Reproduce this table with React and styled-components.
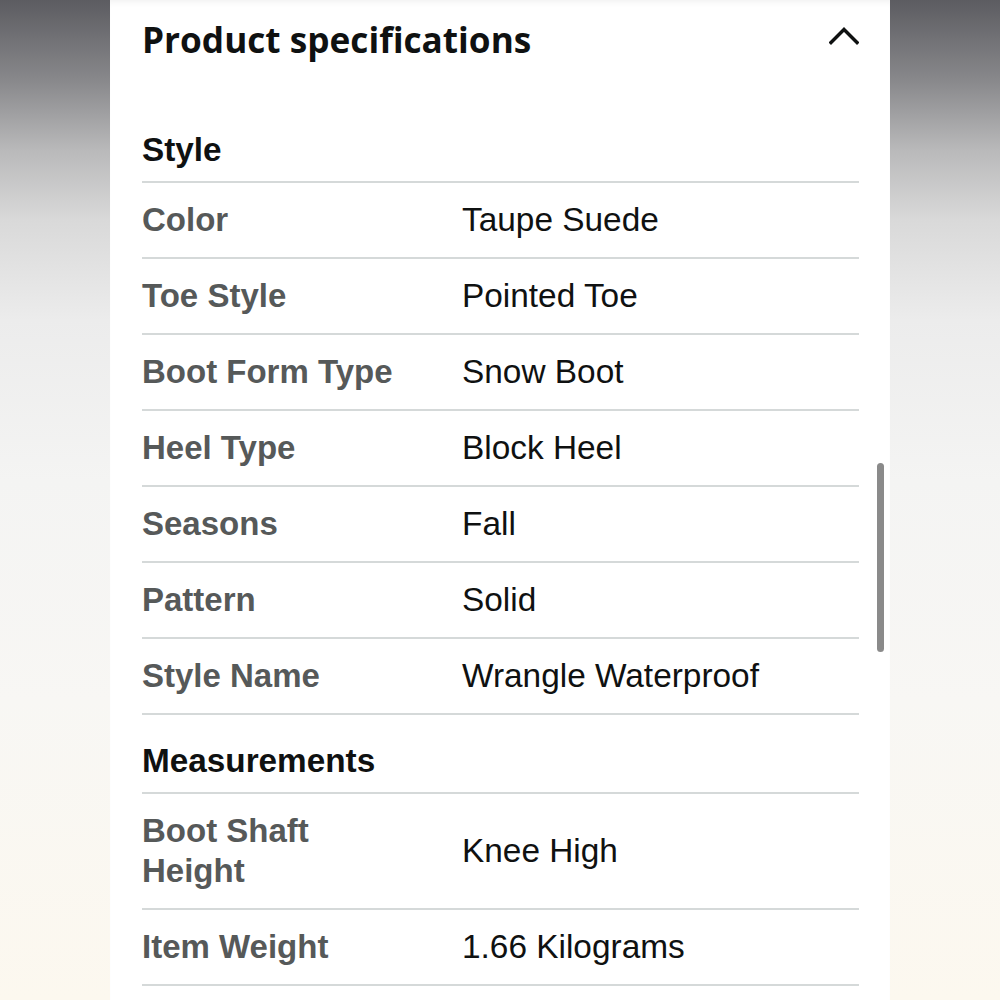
import React from "react";
import styled, { createGlobalStyle } from "styled-components";

const Global = createGlobalStyle`
  html, body { margin: 0; padding: 0; }
  body { width: 1000px; height: 1000px; overflow: hidden; }
`;

const Stage = styled.div`
  width: 1000px;
  height: 1000px;
  display: flex;
  justify-content: center;
  background: linear-gradient(
    180deg,
    #5c5c61 0%,
    #88888b 8%,
    #b9b9ba 15%,
    #d9d9d9 22%,
    #ececec 32%,
    #f4f4f3 48%,
    #f8f7f4 70%,
    #fcf8ef 100%
  );
`;

const Panel = styled.div`
  position: relative;
  width: 780px;
  height: 1000px;
  box-sizing: border-box;
  padding: 0 31px 0 32px;
  background: #ffffff;
  overflow: hidden;
  box-shadow: inset 0 6px 6px -4px rgba(0, 0, 0, 0.06);
`;

const TitleRow = styled.div`
  display: flex;
  align-items: center;
  justify-content: space-between;
  height: 104px;
  box-sizing: border-box;
  padding: 19px 0 45px 0;
`;

const Title = styled.h1`
  margin: 0;
  font-family: "Open Sans", "Noto Sans", sans-serif;
  font-weight: 700;
  font-size: 35.2px;
  line-height: 40px;
  color: #0f1111;
`;

const Chevron = styled.svg`
  width: 30px;
  height: 20px;
  margin-top: -8px;
`;

const SectionHeader = styled.div`
  padding: 26px 0 11px 0;
  line-height: 40px;
  font-family: "Liberation Sans", Arial, sans-serif;
  font-weight: 700;
  font-size: 33.3px;
  color: #0f1111;
  border-bottom: 2px solid #d5d9d9;
`;

const Row = styled.div`
  display: grid;
  grid-template-columns: 320px 1fr;
  align-items: center;
  padding: 17px 0;
  border-bottom: 2px solid #d5d9d9;
`;

const Label = styled.div`
  max-width: 262px;
  font-family: "Liberation Sans", Arial, sans-serif;
  font-weight: 700;
  font-size: 33px;
  line-height: 40px;
  color: #565959;
`;

const Value = styled.div`
  font-family: "Liberation Sans", Arial, sans-serif;
  font-weight: 400;
  font-size: 33.4px;
  line-height: 40px;
  color: #0f1111;
`;

const ScrollThumb = styled.div`
  position: absolute;
  left: 767px;
  top: 463px;
  width: 7px;
  height: 189px;
  border-radius: 4px;
  background: #8a8a8a;
`;

const sections = [
  {
    title: "Style",
    rows: [
      ["Color", "Taupe Suede"],
      ["Toe Style", "Pointed Toe"],
      ["Boot Form Type", "Snow Boot"],
      ["Heel Type", "Block Heel"],
      ["Seasons", "Fall"],
      ["Pattern", "Solid"],
      ["Style Name", "Wrangle Waterproof"],
    ],
  },
  {
    title: "Measurements",
    rows: [
      ["Boot Shaft Height", "Knee High"],
      ["Item Weight", "1.66 Kilograms"],
    ],
  },
];

export default function App() {
  return (
    <>
      <Global />
      <Stage>
        <Panel>
          <TitleRow>
            <Title>Product specifications</Title>
            <Chevron viewBox="0 0 30 20" fill="none">
              <path
                d="M2 17.5 L15 4.5 L28 17.5"
                stroke="#0f1111"
                strokeWidth="3.4"
                strokeLinecap="square"
                strokeLinejoin="miter"
              />
            </Chevron>
          </TitleRow>
          {sections.map((s) => (
            <section key={s.title}>
              <SectionHeader>{s.title}</SectionHeader>
              {s.rows.map(([k, v]) => (
                <Row key={k}>
                  <Label>{k}</Label>
                  <Value>{v}</Value>
                </Row>
              ))}
            </section>
          ))}
          <ScrollThumb />
        </Panel>
      </Stage>
    </>
  );
}
